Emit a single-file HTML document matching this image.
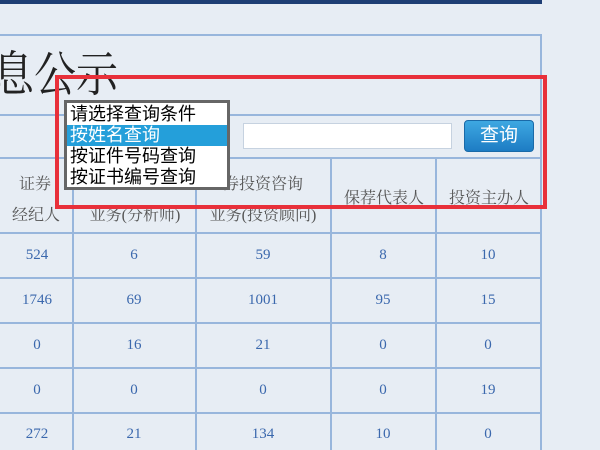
<!DOCTYPE html>
<html><head><meta charset="utf-8"><style>
body{margin:0;width:600px;height:450px;overflow:hidden;background:#e7edf4;position:relative;font-family:"Liberation Serif","Noto Serif CJK SC",serif}
.a{position:absolute}
.h{position:absolute;height:2px;background:#98b6dc;left:0;width:542px}
.v{position:absolute;width:2px;background:#98b6dc;top:158px;height:292px}
.n{position:absolute;color:#3b68ad;font-size:15px;text-align:center;width:60px}
.hd{position:absolute;color:#555;font-size:16px;text-align:center;white-space:nowrap}
.op{height:21px;line-height:21px;font-family:"Liberation Sans","Noto Sans CJK SC",sans-serif;font-size:18px;color:#000;padding-left:3px;white-space:nowrap}
</style></head><body>
<div class="a" style="left:0;top:0;width:542px;height:4px;background:#1e3e74"></div>
<div class="h" style="top:34px"></div>
<div class="a" style="left:540px;top:34px;width:2px;height:416px;background:#98b6dc"></div>
<div class="a" style="left:-8px;top:44px;font-size:42px;color:#222;line-height:56px;transform:scaleY(1.15);transform-origin:top left">息公示</div>
<div class="h" style="top:114px"></div>
<div class="h" style="top:157px"></div>
<div class="h" style="top:232px"></div>
<div class="h" style="top:277px"></div>
<div class="h" style="top:322px"></div>
<div class="h" style="top:367px"></div>
<div class="h" style="top:412px"></div>
<div class="v" style="left:72px"></div>
<div class="v" style="left:195px"></div>
<div class="v" style="left:330px"></div>
<div class="v" style="left:435px"></div>
<div class="hd" style="left:15px;top:171px;width:40px">证券</div>
<div class="hd" style="left:8px;top:202px;width:56px">经纪人</div>
<div class="hd" style="left:78px;top:202px;width:114px">业务(分析师)</div>
<div class="hd" style="left:198px;top:171px;width:130px">券投资咨询</div>
<div class="hd" style="left:198px;top:202px;width:130px">业务(投资顾问)</div>
<div class="hd" style="left:332px;top:185px;width:104px">保荐代表人</div>
<div class="hd" style="left:437px;top:185px;width:104px">投资主办人</div>
<div class="n" style="left:7px;top:247px">524</div><div class="n" style="left:104px;top:247px">6</div><div class="n" style="left:233px;top:247px">59</div><div class="n" style="left:353px;top:247px">8</div><div class="n" style="left:458px;top:247px">10</div>
<div class="n" style="left:7px;top:292px">1746</div><div class="n" style="left:104px;top:292px">69</div><div class="n" style="left:233px;top:292px">1001</div><div class="n" style="left:353px;top:292px">95</div><div class="n" style="left:458px;top:292px">15</div>
<div class="n" style="left:7px;top:337px">0</div><div class="n" style="left:104px;top:337px">16</div><div class="n" style="left:233px;top:337px">21</div><div class="n" style="left:353px;top:337px">0</div><div class="n" style="left:458px;top:337px">0</div>
<div class="n" style="left:7px;top:382px">0</div><div class="n" style="left:104px;top:382px">0</div><div class="n" style="left:233px;top:382px">0</div><div class="n" style="left:353px;top:382px">0</div><div class="n" style="left:458px;top:382px">19</div>
<div class="n" style="left:7px;top:426px">272</div><div class="n" style="left:104px;top:426px">21</div><div class="n" style="left:233px;top:426px">134</div><div class="n" style="left:353px;top:426px">10</div><div class="n" style="left:458px;top:426px">0</div>
<div class="a" style="left:243px;top:123px;width:207px;height:24px;background:#fff;border:1px solid #c6d2e0"></div>
<div class="a" style="left:464px;top:120px;width:70px;height:32px;border-radius:4px;background:linear-gradient(#3ea8e2,#1d7cc4);border:1px solid #1a6aa8;box-sizing:border-box;color:#fff;font-family:'Liberation Sans','Noto Sans CJK SC',sans-serif;font-size:19px;text-align:center;line-height:30px">查询</div>
<div class="a" style="left:64px;top:100px;width:160px;height:83px;background:#fff;border:3px solid #666;padding-top:1px">
<div class="op">请选择查询条件</div>
<div class="op" style="background:#249fda;color:#fff">按姓名查询</div>
<div class="op">按证件号码查询</div>
<div class="op">按证书编号查询</div>
</div>
<div class="a" style="left:55px;top:75px;width:484px;height:126px;border:4px solid #e8303a"></div>
</body></html>
